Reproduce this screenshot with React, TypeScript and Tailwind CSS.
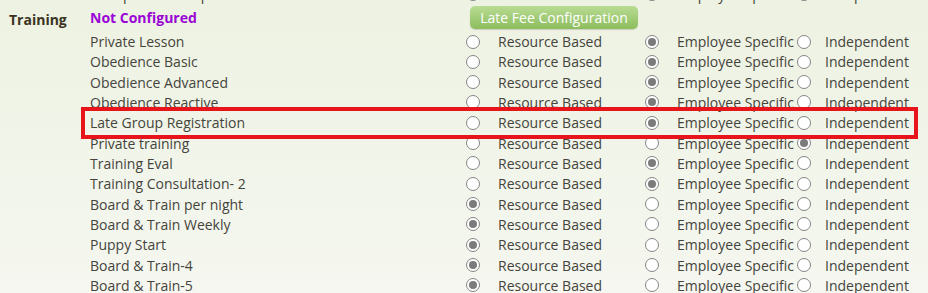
type Choice = "resource" | "employee" | "independent";

const items: { name: string; value: Choice }[] = [
  { name: "Private Lesson", value: "employee" },
  { name: "Obedience Basic", value: "employee" },
  { name: "Obedience Advanced", value: "employee" },
  { name: "Obedience Reactive", value: "employee" },
  { name: "Late Group Registration", value: "employee" },
  { name: "Private training", value: "independent" },
  { name: "Training Eval", value: "employee" },
  { name: "Training Consultation- 2", value: "employee" },
  { name: "Board & Train per night", value: "resource" },
  { name: "Board & Train Weekly", value: "resource" },
  { name: "Puppy Start", value: "resource" },
  { name: "Board & Train-4", value: "resource" },
  { name: "Board & Train-5", value: "resource" },
];

function Radio({ checked }: { checked: boolean }) {
  return (
    <span className="flex h-[14px] w-[14px] shrink-0 items-center justify-center rounded-full border border-[#858585] bg-white">
      {checked && <span className="h-[8px] w-[8px] rounded-full bg-[#7b7b7b]" />}
    </span>
  );
}

function Row({ name, value }: { name: string; value: Choice }) {
  return (
    <div className="flex h-[20.33px] items-center whitespace-nowrap">
      <div className="w-[462px] shrink-0 pl-[90px]">{name}</div>
      <div className="flex w-[179px] shrink-0 items-center pl-[4px]">
        <Radio checked={value === "resource"} />
        <span className="ml-[18px]">Resource Based</span>
      </div>
      <div className="flex w-[156px] shrink-0 items-center overflow-hidden pl-[4px]">
        <Radio checked={value === "employee"} />
        <span className="ml-[18px]">Employee Specific</span>
      </div>
      <div className="flex items-center">
        <Radio checked={value === "independent"} />
        <span className="ml-[14px]">Independent</span>
      </div>
    </div>
  );
}

export default function App() {
  return (
    <div className="relative h-[293px] w-[928px] overflow-hidden bg-gradient-to-b from-[#edf2e2] to-[#f5f7f0] font-['Open_Sans',sans-serif] text-[14px] text-[#45443c]">
      <div className="-mt-[16px]">
        {/* previous section, cut off at the top */}
        <Row name="Group Class Sample" value="employee" />

        {/* Training */}
        <div className="relative flex h-[27px] items-center">
          <div className="absolute left-[9px] top-[5px] font-bold text-[#3b3322]">Training</div>
          <div className="w-[470px] shrink-0 pl-[90px] font-bold text-[#9a05d6]">Not Configured</div>
          <button className="h-[23px] w-[168px] rounded-[5px] bg-gradient-to-b from-[#b9dc93] to-[#8dbd5e] text-white shadow-[0_1px_1px_rgba(0,0,0,0.15)]">
            Late Fee Configuration
          </button>
        </div>
        {items.map((it) => (
          <Row key={it.name} name={it.name} value={it.value} />
        ))}
      </div>

      {/* highlight */}
      <div className="absolute left-[81px] top-[107px] h-[32px] w-[837px] border-4 border-[#e8141c]" />
    </div>
  );
}
